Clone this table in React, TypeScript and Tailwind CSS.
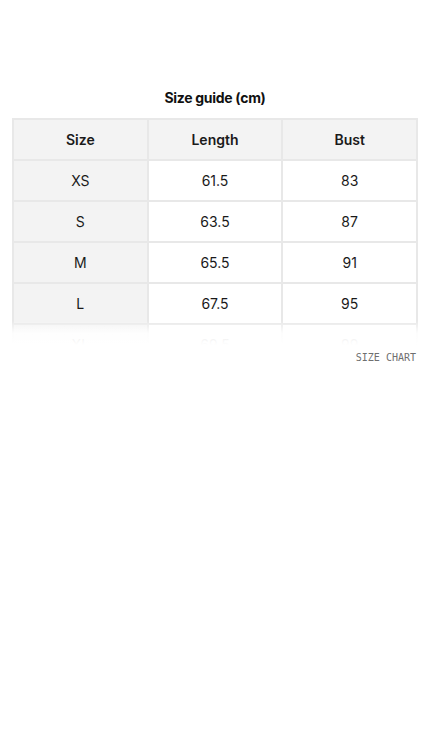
const rows = [
  { size: 'XS', length: '61.5', bust: '83' },
  { size: 'S', length: '63.5', bust: '87' },
  { size: 'M', length: '65.5', bust: '91' },
  { size: 'L', length: '67.5', bust: '95' },
  { size: 'XL', length: '69.5', bust: '99' },
]

export default function App() {
  return (
    <div className="min-h-[752px] w-[430px] bg-white font-['Inter','Liberation_Sans',sans-serif] text-[#1a1a1a]">
      <div className="pt-[88px]">
        <h2 className="text-center text-[14px] font-bold leading-[20px] tracking-[-0.3px] text-[#111]">Size guide (cm)</h2>

        <div className="relative ml-[12px] mr-[12px] mt-[10px] h-[227px] overflow-hidden">
          <div className="grid grid-cols-3 border-t-2 border-l-2 border-[#e8e8e8]">
            <div className="flex h-[41px] items-center justify-center border-r-2 border-b-2 border-[#e8e8e8] bg-[#f3f3f3] text-[14px] font-semibold">Size</div>
            <div className="flex h-[41px] items-center justify-center border-r-2 border-b-2 border-[#e8e8e8] bg-[#f3f3f3] text-[14px] font-semibold">Length</div>
            <div className="flex h-[41px] items-center justify-center border-r-2 border-b-2 border-[#e8e8e8] bg-[#f3f3f3] text-[14px] font-semibold">Bust</div>
            {rows.map((r) => (
              <div key={r.size} className="contents">
                <div className="flex h-[41px] items-center justify-center border-r-2 border-b-2 border-[#e8e8e8] bg-[#f3f3f3] text-[14px]">{r.size}</div>
                <div className="flex h-[41px] items-center justify-center border-r-2 border-b-2 border-[#e8e8e8] text-[14px]">{r.length}</div>
                <div className="flex h-[41px] items-center justify-center border-r-2 border-b-2 border-[#e8e8e8] text-[14px]">{r.bust}</div>
              </div>
            ))}
          </div>
          <div className="absolute inset-x-0 bottom-0 h-[24px] bg-gradient-to-b from-white/0 via-white/90 to-white" />
        </div>

        <div className="mt-[6px] pr-[14px] text-right font-['DejaVu_Sans_Mono','Liberation_Mono',monospace] text-[10px] leading-[14px] text-[#6f6f6f]">
          SIZE CHART
        </div>
      </div>
    </div>
  )
}
